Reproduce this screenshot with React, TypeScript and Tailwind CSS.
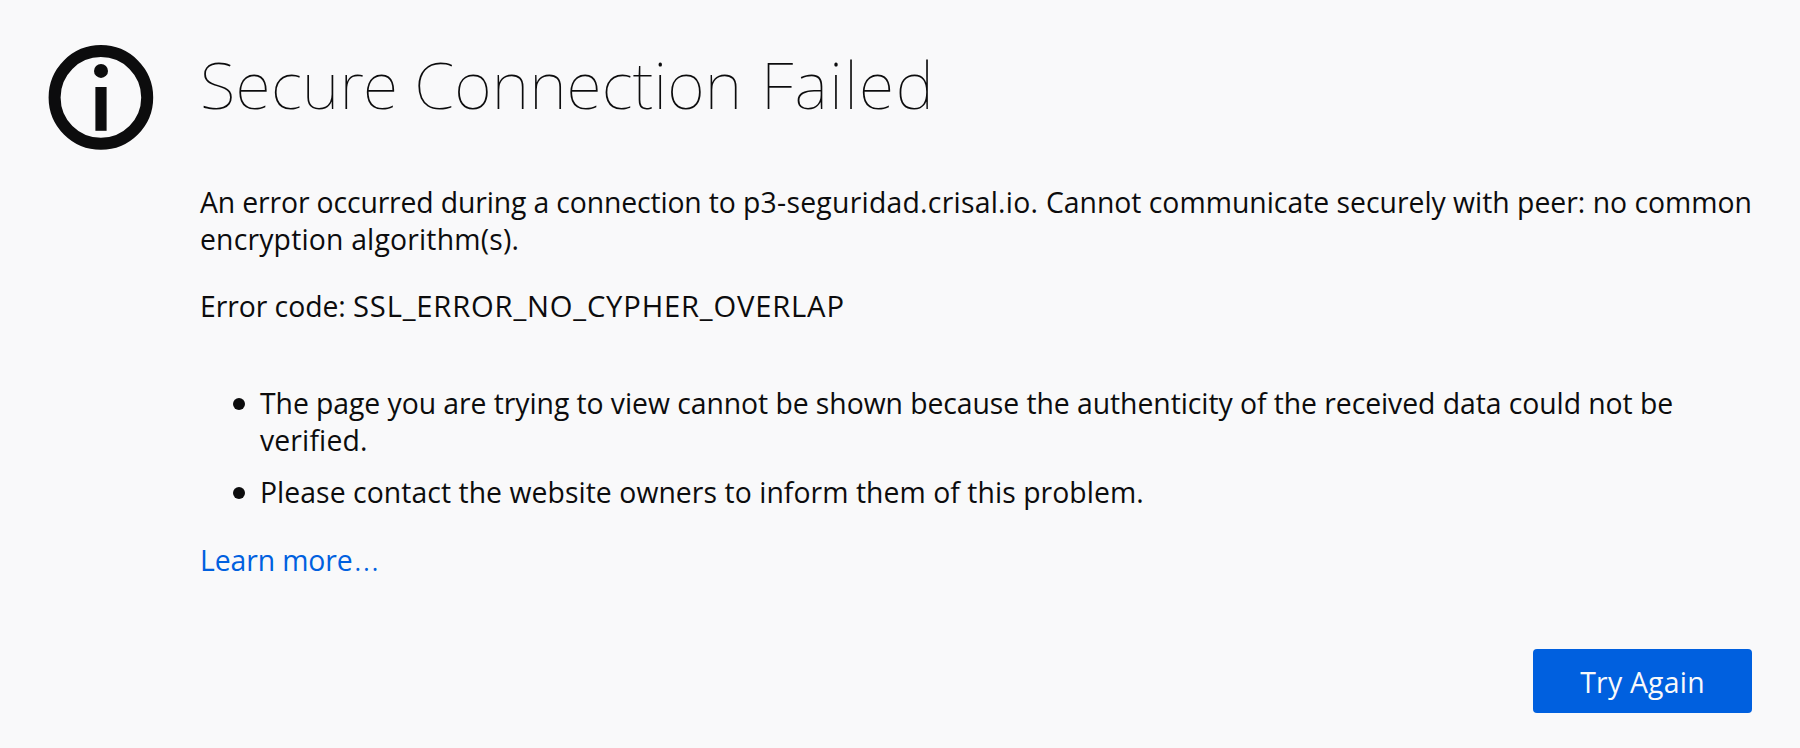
export default function App() {
  return (
    <main className="flex h-[748px] w-[1800px] overflow-hidden bg-[#f9f9fa] px-12 font-['Open_Sans','Noto_Sans',sans-serif] text-[28.35px] leading-[37px] text-[#0c0c0d]">
      <svg viewBox="0 0 106 106" className="mt-[44px] h-[106px] w-[106px] shrink-0" aria-hidden="true">
        <circle cx="52.9" cy="53.4" r="46.3" fill="none" stroke="#0c0c0d" strokeWidth="12" />
        <circle cx="53" cy="26.9" r="7" fill="#0c0c0d" />
        <rect x="47.4" y="43" width="11.2" height="43.8" fill="#0c0c0d" />
      </svg>
      <div className="ml-[46px] flex w-[1552px] flex-col whitespace-nowrap">
        <h1 className="mt-[38px] h-[92px] font-['Noto_Sans',sans-serif] text-[65px] leading-[92px] font-thin">
          <span className="tracking-[0.3px]">Secure</span>{' '}
          <span className="-ml-[1px] tracking-[0.15px]">Connection</span>{' '}
          <span className="ml-[2px] tracking-[1.5px]">Failed</span>
        </h1>
        <p className="mt-[54px]">
          <span className="tracking-[-0.13px]">An error occurred during a connection to </span>
          <span className="tracking-[0.26px]">p3-seguridad.crisal.io. </span>
          <span>Cannot communicate securely with peer: no common</span>
          <br />
          <span className="tracking-[0.19px]">encryption algorithm(s).</span>
        </p>
        <p className="mt-[30px] h-[37px]">
          <span className="tracking-[-0.05px]">Error code: </span>
          <span className="text-[29.2px] tracking-[0.82px]">SSL_ERROR_NO_CYPHER_OVERLAP</span>
        </p>
        <ul className="mt-[60px] flex flex-col gap-[15px] pl-[33px]">
          <li className="flex">
            <span className="mt-[13px] mr-[15px] h-3 w-3 shrink-0 rounded-full bg-[#0c0c0d]" />
            <span className="tracking-[-0.054px]">
              The page you are trying to view cannot be shown because the authenticity of the received data could not be
              <br />
              <span className="tracking-[0.15px]">verified.</span>
            </span>
          </li>
          <li className="flex">
            <span className="mt-[13px] mr-[15px] h-3 w-3 shrink-0 rounded-full bg-[#0c0c0d]" />
            <span className="tracking-[0.062px]">Please contact the website owners to inform them of this problem.</span>
          </li>
        </ul>
        <a href="#" className="mt-[29px] h-[38px] self-start text-[#0060df]">
          <span className="tracking-[-0.1px]">Learn more</span>
          <span className="ml-px font-light text-[36px] leading-none">…</span>
        </a>
        <button className="mt-[71px] flex h-16 w-[219px] items-center justify-center self-end rounded-[4px] bg-[#0060df] pt-[2px] tracking-[0.25px] text-[#f9f9fa]">
          Try Again
        </button>
      </div>
    </main>
  );
}
